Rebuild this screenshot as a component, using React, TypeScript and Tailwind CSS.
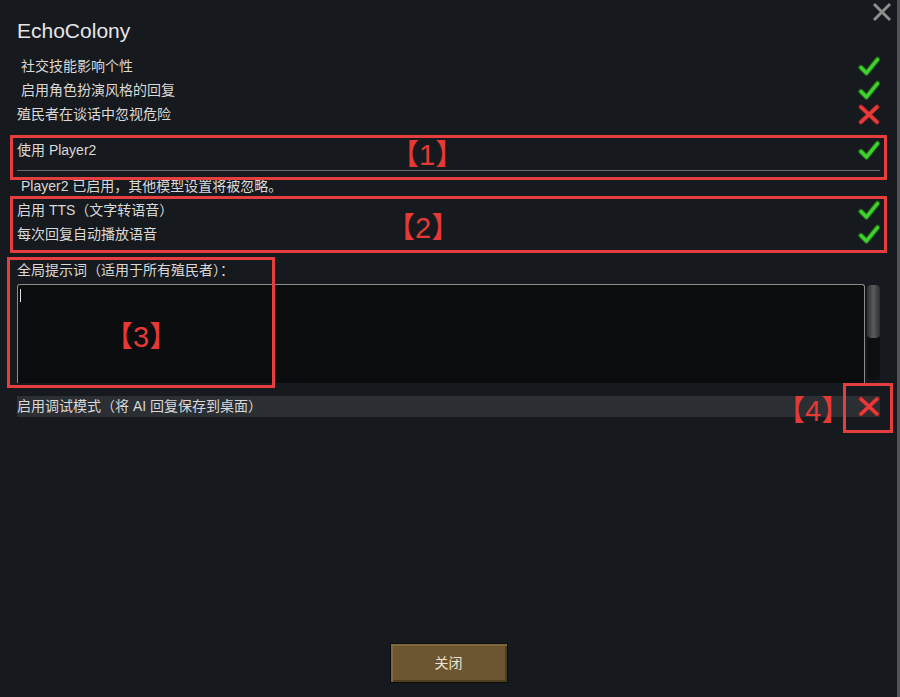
const FONT = {
  fontFamily: '"Liberation Sans", "Noto Sans CJK SC", sans-serif',
};

function Check() {
  return (
    <svg width="22" height="20" viewBox="0 0 22 20" className="shrink-0">
      <path
        d="M3 11.5 L8.5 17 L19.5 3.5"
        fill="none"
        stroke="#1d5e16"
        strokeWidth="5.5"
        strokeLinecap="round"
        strokeLinejoin="round"
      />
      <path
        d="M3 11.5 L8.5 17 L19.5 3.5"
        fill="none"
        stroke="#3fd12c"
        strokeWidth="3.5"
        strokeLinecap="round"
        strokeLinejoin="round"
      />
    </svg>
  );
}

function Cross() {
  return (
    <svg width="22" height="21" viewBox="0 0 22 21" className="shrink-0">
      <path
        d="M3 3 L19 18 M19 3 L3 18"
        fill="none"
        stroke="#7a1f1f"
        strokeWidth="5"
        strokeLinecap="round"
      />
      <path
        d="M3 3 L19 18 M19 3 L3 18"
        fill="none"
        stroke="#e53b3b"
        strokeWidth="3.5"
        strokeLinecap="round"
      />
    </svg>
  );
}

function Row({
  label,
  on,
  indent,
}: {
  label: string;
  on: boolean;
  indent?: boolean;
}) {
  return (
    <div className="flex h-[24px] items-center justify-between">
      <span className={indent ? "pl-[4px]" : ""}>{label}</span>
      {on ? <Check /> : <Cross />}
    </div>
  );
}

function Tag({ n, className }: { n: string; className: string }) {
  return (
    <span
      className={`absolute text-[29px] leading-[32px] text-[#e53935] ${className}`}
    >
      【{n}】
    </span>
  );
}

export default function App() {
  return (
    <div
      className="relative flex h-[697px] w-[900px] flex-col overflow-hidden border-r-[3px] border-[#505357] bg-[#16191e] text-[14px] text-[#d9d9d9]"
      style={FONT}
    >
      {/* close */}
      <svg
        width="20"
        height="20"
        viewBox="0 0 20 20"
        className="absolute right-[5px] top-[2px]"
      >
        <path
          d="M2 2 L18 18 M18 2 L2 18"
          stroke="#8e8e8e"
          strokeWidth="3"
          fill="none"
        />
      </svg>

      <div className="pl-[17px] pr-[17px]">
        <div className="pt-[17px] text-[21px] leading-[28px] text-[#e6e6e6]">
          EchoColony
        </div>

        <div className="mt-[9px]">
          <Row label="社交技能影响个性" on indent />
          <Row label="启用角色扮演风格的回复" on indent />
          <Row label="殖民者在谈话中忽视危险" on={false} />
        </div>

        <div className="mt-[12px]">
          <Row label="使用 Player2" on />
        </div>
        <div className="mt-[8px] h-px bg-[#6e6e6e]" />
        <div className="mt-[3px] flex h-[24px] items-center pl-[4px]">
          Player2 已启用，其他模型设置将被忽略。
        </div>

        <Row label="启用 TTS（文字转语音）" on />
        <Row label="每次回复自动播放语音" on />

        <div className="mt-[12px] flex h-[24px] items-center">
          全局提示词（适用于所有殖民者）：
        </div>

        {/* prompt box */}
        <div className="mt-[2px] flex gap-[2px]">
          <div className="h-[99px] w-[848px] rounded-t-[3px] border border-b-0 border-[#8c8c8c] bg-[#0b0c0e] pl-[2px] pt-[4px]">
            <div className="h-[13px] w-px bg-[#e0e0e0]" />
          </div>
          <div className="mt-[1px] flex h-[95px] w-[13px] flex-col rounded-[4px] bg-[#0e0f12]">
            <div className="h-[53px] rounded-[4px] bg-gradient-to-r from-[#2e2f31] via-[#5a5b5d] to-[#2e2f31]" />
          </div>
        </div>

        {/* debug */}
        <div className="mt-[13px] flex h-[21px] items-center justify-between bg-[#2b2e33]">
          <span>启用调试模式（将 AI 回复保存到桌面）</span>
          <Cross />
        </div>
      </div>

      <button className="mb-[14px] mt-auto flex h-[40px] w-[118px] items-center justify-center self-center border border-[#0c0c0c] bg-[#6c5631] text-[14px] text-[#ece4cf] shadow-[inset_2px_2px_0_#7d6840,inset_-2px_-2px_0_#4f3d20]">
        关闭
      </button>

      {/* annotations */}
      <div className="absolute left-[10px] top-[135px] h-[45px] w-[877px] border-[3px] border-[#e53e3e]" />
      <div className="absolute left-[10px] top-[196px] h-[57px] w-[877px] border-[3px] border-[#e53e3e]" />
      <div className="absolute left-[7px] top-[257px] h-[131px] w-[268px] border-[3px] border-[#e53e3e]" />
      <div className="absolute left-[843px] top-[383px] h-[50px] w-[50px] border-[3px] border-[#e53e3e]" />
      <Tag n="1" className="left-[390px] top-[139px]" />
      <Tag n="2" className="left-[386px] top-[212px]" />
      <Tag n="3" className="left-[104px] top-[321px]" />
      <Tag n="4" className="left-[776px] top-[395px]" />
    </div>
  );
}
